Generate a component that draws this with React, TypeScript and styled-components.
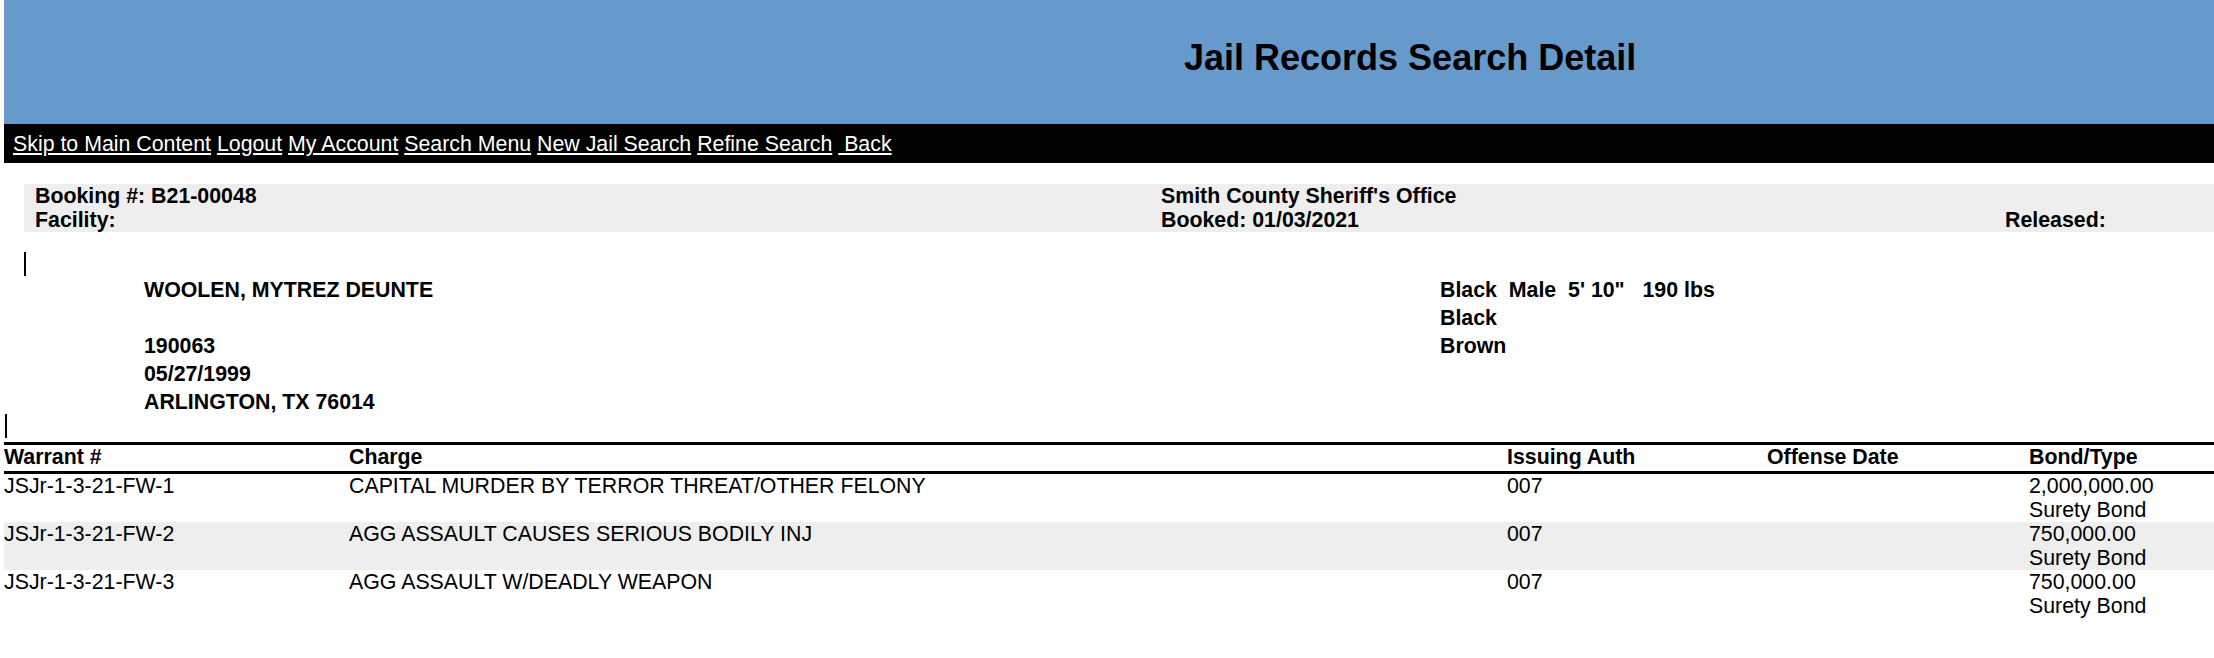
import React from "react";
import styled, { createGlobalStyle } from "styled-components";

const GlobalStyle = createGlobalStyle`
  html, body {
    margin: 0;
    padding: 0;
    background: #ffffff;
    overflow: hidden;
  }
  body {
    font-family: "Liberation Sans", Arial, sans-serif;
    color: #000000;
  }
`;

const Page = styled.div`
  padding-left: 4px;
  width: 2210px;
  overflow: hidden;
`;

const Header = styled.header`
  height: 124px;
  background: #6699cc;
  box-sizing: border-box;
  padding-top: 37px;
  padding-left: 1180px;
`;

const Title = styled.h1`
  margin: 0;
  font-size: 36px;
  font-weight: bold;
  line-height: 41px;
  white-space: nowrap;
`;

const Nav = styled.nav`
  height: 39px;
  box-sizing: border-box;
  background: #000000;
  padding: 8px 9px 0;
  font-size: 21.33px;
  line-height: 24px;
  white-space: pre;
  color: #ffffff;
`;

const NavLink = styled.a`
  color: #ffffff;
  text-decoration: underline;
  text-underline-offset: 2px;
  white-space: pre;
`;

const BookingBar = styled.section`
  margin: 21px 0 0 20px;
  background: #eeeeee;
  padding-left: 11px;
  display: grid;
  grid-template-columns: 1126px 844px 1fr;
  grid-auto-rows: 24px;
  font-size: 21.33px;
  font-weight: bold;
  line-height: 24px;
  white-space: nowrap;
`;

const Cell = styled.div``;

const Caret = styled.div<{ $left: number; $mt: number }>`
  margin-left: ${(p) => p.$left}px;
  margin-top: ${(p) => p.$mt}px;
  width: 0;
  height: 24px;
  border-left: 2px solid #000000;
`;

const Person = styled.section`
  display: flex;
  padding-left: 140px;
  font-size: 21.33px;
  font-weight: bold;
  line-height: 28px;
`;

const PersonCol = styled.div<{ $width?: number }>`
  display: flex;
  flex-direction: column;
  width: ${(p) => (p.$width ? `${p.$width}px` : "auto")};
`;

const PersonLine = styled.div`
  height: 28px;
  white-space: pre;
`;

const Table = styled.div`
  margin-top: 4px;
  border-top: 3px solid #000000;
  font-size: 21.33px;
  line-height: 24px;
`;

const Row = styled.div<{ $head?: boolean; $shade?: boolean }>`
  display: grid;
  grid-template-columns: 345px 1158px 260px 262px 1fr;
  background: ${(p) => (p.$shade ? "#eeeeee" : "transparent")};
  font-weight: ${(p) => (p.$head ? "bold" : "normal")};
  padding-bottom: ${(p) => (p.$head ? "2px" : "0")};
  border-bottom: ${(p) => (p.$head ? "3px solid #000000" : "none")};
  min-height: ${(p) => (p.$head ? "24px" : "48px")};
  white-space: nowrap;
`;

const TCell = styled.div``;

const navItems = [
  "Skip to Main Content",
  "Logout",
  "My Account",
  "Search Menu",
  "New Jail Search",
  "Refine Search",
  " Back",
];

const warrants = [
  {
    no: "JSJr-1-3-21-FW-1",
    charge: "CAPITAL MURDER BY TERROR THREAT/OTHER FELONY",
    auth: "007",
    date: "",
    bond: "2,000,000.00",
    type: "Surety Bond",
  },
  {
    no: "JSJr-1-3-21-FW-2",
    charge: "AGG ASSAULT CAUSES SERIOUS BODILY INJ",
    auth: "007",
    date: "",
    bond: "750,000.00",
    type: "Surety Bond",
  },
  {
    no: "JSJr-1-3-21-FW-3",
    charge: "AGG ASSAULT W/DEADLY WEAPON",
    auth: "007",
    date: "",
    bond: "750,000.00",
    type: "Surety Bond",
  },
];

export default function App() {
  return (
    <>
      <GlobalStyle />
      <Page>
        <Header>
          <Title>Jail Records Search Detail</Title>
        </Header>
        <Nav>
          {navItems.map((item, i) => (
            <React.Fragment key={item}>
              {i > 0 && " "}
              <NavLink href="#">{item}</NavLink>
            </React.Fragment>
          ))}
        </Nav>
        <BookingBar>
          <Cell>Booking #: B21-00048</Cell>
          <Cell>Smith County Sheriff's Office</Cell>
          <Cell />
          <Cell>Facility:</Cell>
          <Cell>Booked: 01/03/2021</Cell>
          <Cell>Released:</Cell>
        </BookingBar>
        <Caret $left={20} $mt={20} />
        <Person>
          <PersonCol $width={1296}>
            <PersonLine>WOOLEN, MYTREZ DEUNTE</PersonLine>
            <PersonLine />
            <PersonLine>190063</PersonLine>
            <PersonLine>05/27/1999</PersonLine>
            <PersonLine>ARLINGTON, TX 76014</PersonLine>
          </PersonCol>
          <PersonCol>
            <PersonLine>{'Black  Male  5\' 10"   190 lbs'}</PersonLine>
            <PersonLine>Black</PersonLine>
            <PersonLine>Brown</PersonLine>
          </PersonCol>
        </Person>
        <Caret $left={1} $mt={-2} />
        <Table>
          <Row $head>
            <TCell>Warrant #</TCell>
            <TCell>Charge</TCell>
            <TCell>Issuing Auth</TCell>
            <TCell>Offense Date</TCell>
            <TCell>Bond/Type</TCell>
          </Row>
          {warrants.map((w, i) => (
            <Row key={w.no} $shade={i % 2 === 1}>
              <TCell>{w.no}</TCell>
              <TCell>{w.charge}</TCell>
              <TCell>{w.auth}</TCell>
              <TCell>{w.date}</TCell>
              <TCell>
                {w.bond}
                <br />
                {w.type}
              </TCell>
            </Row>
          ))}
        </Table>
      </Page>
    </>
  );
}
